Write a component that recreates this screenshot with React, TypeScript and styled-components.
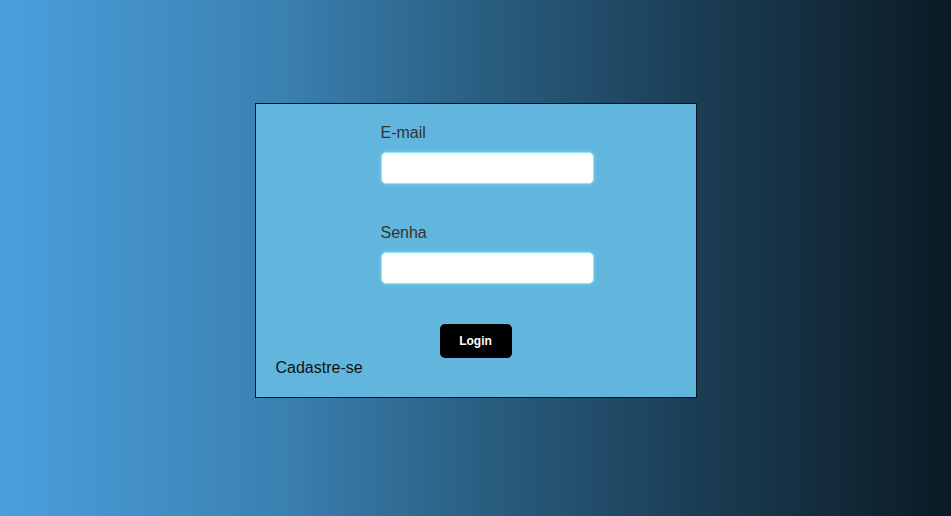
import React from "react";
import styled, { createGlobalStyle } from "styled-components";

const Global = createGlobalStyle`
  html, body { margin: 0; padding: 0; height: 100%; }
  body {
    font-family: "Liberation Sans", Arial, sans-serif;
    background: linear-gradient(to right, #4aa0dd 0%, #3a80b0 30%, #2a5f82 50%, #1c3f57 72%, #0b1a24 100%);
    min-height: 516px;
  }
`;

const Page = styled.div`
  display: flex;
  justify-content: center;
  padding-top: 103px;
`;

const Card = styled.div`
  width: 440px;
  height: 293px;
  border: 1px solid #0a1520;
  background: #62b5dc;
  display: flex;
  flex-direction: column;
  box-sizing: content-box;
`;

const Form = styled.div`
  display: flex;
  flex-direction: column;
  padding: 20px 0 0 125px;
`;

const Label = styled.label`
  font-size: 16px;
  line-height: 18px;
  color: #333;
  margin-bottom: 10px;
`;

const Input = styled.input`
  width: 213px;
  height: 32px;
  box-sizing: border-box;
  border: 1px solid #8ae6f8;
  border-radius: 5px;
  background: #fff;
  box-shadow: 0 0 4px #6fdcf6;
  outline: none;
  margin-bottom: 40px;
`;

const ButtonRow = styled.div`
  display: flex;
  justify-content: center;
`;

const LoginButton = styled.button`
  width: 72px;
  height: 34px;
  background: #000;
  color: #fff;
  border: none;
  border-radius: 5px;
  font-family: "Liberation Sans", Arial, sans-serif;
  font-weight: bold;
  font-size: 12px;
  cursor: pointer;
`;

const Footer = styled.div`
  padding: 1px 0 0 20px;
  font-size: 16px;
  line-height: 18px;
  color: #111;
`;

export default function App() {
  return (
    <>
      <Global />
      <Page>
        <Card>
          <Form>
            <Label>E-mail</Label>
            <Input type="email" />
            <Label>Senha</Label>
            <Input type="password" />
          </Form>
          <ButtonRow>
            <LoginButton>Login</LoginButton>
          </ButtonRow>
          <Footer>Cadastre-se</Footer>
        </Card>
      </Page>
    </>
  );
}
